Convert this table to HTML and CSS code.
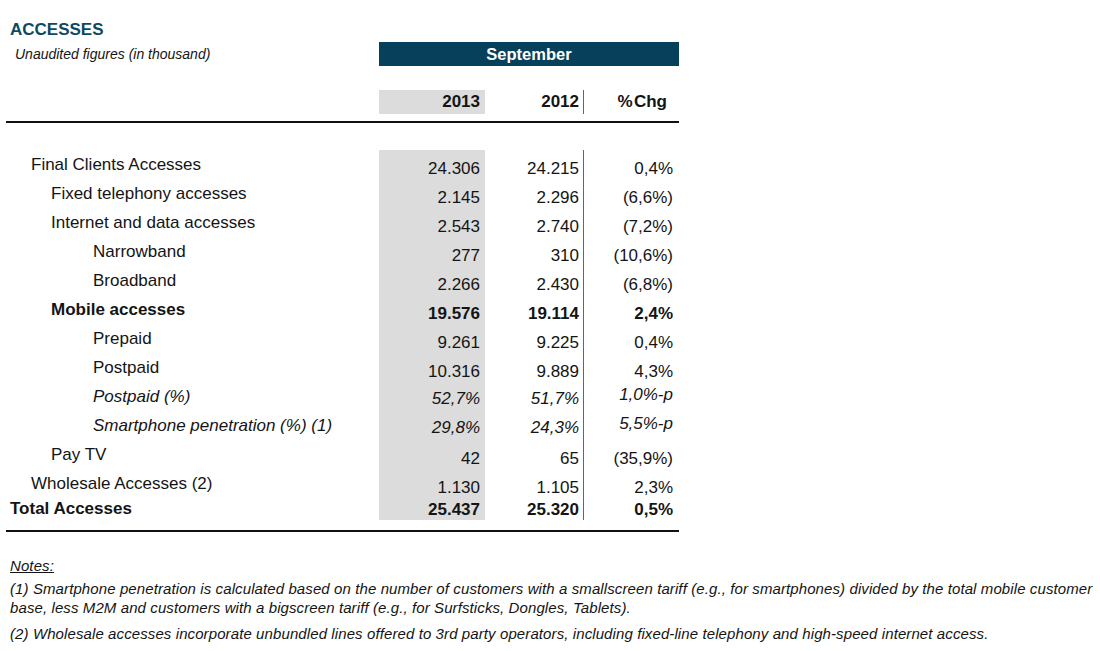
FILE: index.html
```html
<!DOCTYPE html>
<html lang="en">
<head>
<meta charset="utf-8">
<title>Accesses</title>
<link rel="stylesheet" href="styles.css">
</head>
<body>
<div class="report">
  <h1 class="title">ACCESSES</h1>
  <div class="band">
    <p class="sub">Unaudited figures (in thousand)</p>
    <div class="period">September</div>
  </div>
  <div class="head grid">
    <div></div>
    <div class="num shade hy1">2013</div>
    <div class="num sep hy2">2012</div>
    <div class="num hchg">%&#8202;Chg</div>
  </div>
  <div class="rule"></div>
  <div class="body grid">
    <div class="lab l1">Final Clients Accesses</div><div class="num shade">24.306</div><div class="num sep">24.215</div><div class="num chg">0,4%</div>
    <div class="lab l2">Fixed telephony accesses</div><div class="num shade">2.145</div><div class="num sep">2.296</div><div class="num chg">(6,6%)</div>
    <div class="lab l2">Internet and data accesses</div><div class="num shade">2.543</div><div class="num sep">2.740</div><div class="num chg">(7,2%)</div>
    <div class="lab l3">Narrowband</div><div class="num shade">277</div><div class="num sep">310</div><div class="num chg">(10,6%)</div>
    <div class="lab l3">Broadband</div><div class="num shade">2.266</div><div class="num sep">2.430</div><div class="num chg">(6,8%)</div>
    <div class="lab l2 b">Mobile accesses</div><div class="num shade b">19.576</div><div class="num sep b">19.114</div><div class="num chg b">2,4%</div>
    <div class="lab l3">Prepaid</div><div class="num shade">9.261</div><div class="num sep">9.225</div><div class="num chg">0,4%</div>
    <div class="lab l3">Postpaid</div><div class="num shade">10.316</div><div class="num sep">9.889</div><div class="num chg">4,3%</div>
    <div class="lab l3 it">Postpaid (%)</div><div class="num shade it">52,7%</div><div class="num sep it">51,7%</div><div class="num chg it up">1,0%-p</div>
    <div class="lab l3 it">Smartphone penetration (%) (1)</div><div class="num shade it">29,8%</div><div class="num sep it">24,3%</div><div class="num chg it up">5,5%-p</div>
    <div class="lab l2">Pay TV</div><div class="num shade">42</div><div class="num sep">65</div><div class="num chg">(35,9%)</div>
    <div class="lab l1">Wholesale Accesses (2)</div><div class="num shade">1.130</div><div class="num sep">1.105</div><div class="num chg">2,3%</div>
    <div class="lab l0 b tot">Total Accesses</div><div class="num shade b tot">25.437</div><div class="num sep b tot">25.320</div><div class="num chg b tot">0,5%</div>
  </div>
  <div class="rule bottom"></div>
</div>
<div class="notes">
  <p class="notes-title">Notes:</p>
  <p>(1) Smartphone penetration is calculated based on the number of customers with a smallscreen tariff (e.g., for smartphones) divided by the total mobile customer<br>base, less M2M and customers with a bigscreen tariff (e.g., for Surfsticks, Dongles, Tablets).</p>
  <p>(2) Wholesale accesses incorporate unbundled lines offered to 3rd party operators, including fixed-line telephony and high-speed internet access.</p>
</div>
</body>
</html>
```
FILE: styles.css
```css
html, body {
  margin: 0;
  padding: 0;
  background: #ffffff;
}
body {
  font-family: "Liberation Sans", Arial, sans-serif;
  color: #141414;
}
.report {
  width: 673px;
  padding: 20px 0 0 6px;
}
.title {
  margin: 0;
  padding-left: 4px;
  font-size: 17px;
  line-height: 20px;
  font-weight: bold;
  color: #0c4a60;
}
.band {
  display: grid;
  grid-template-columns: 373px 300px;
  margin-top: 2px;
  height: 24px;
}
.sub {
  margin: 0;
  padding-left: 9px;
  font-style: italic;
  font-size: 14px;
  line-height: 24px;
}
.period {
  background: #07405a;
  color: #fff;
  font-weight: bold;
  font-size: 16.5px;
  line-height: 24px;
  text-align: center;
}
.grid {
  display: grid;
  grid-template-columns: 373px 106px 99px 95px;
}
.head {
  margin-top: 24px;
  font-weight: bold;
  font-size: 17px;
  line-height: 24px;
}
.head .hy1 { padding-right: 5px; }
.head .hy2 { padding-right: 4px; }
.head .hchg { padding-right: 12px; }
.rule {
  margin-top: 7px;
  height: 2px;
  background: #111;
}
.rule.bottom {
  margin-top: 10px;
}
.body {
  margin-top: 27px;
  font-size: 17px;
}
.num {
  text-align: right;
}
.shade {
  background: #dcdcdc;
}
.sep {
  border-right: 1px solid #666;
}
.lab {
  line-height: 21px;
  padding-top: 4px;
  padding-bottom: 4px;
}
.body .num {
  line-height: 21px;
  padding: 8px 0 0 0;
  height: 29px;
  box-sizing: border-box;
}
.body .shade { padding-right: 5px; }
.body .sep { padding-right: 4px; }
.body .chg { padding-right: 6px; }
.body .num.it { padding-top: 6px; }
.body .num.it.up { padding-top: 2px; }
.l0 { padding-left: 4px; }
.l1 { padding-left: 25px; }
.l2 { padding-left: 45px; }
.l3 { padding-left: 87px; }
.b { font-weight: bold; }
.it { font-style: italic; }
.lab.tot {
  padding-top: 0;
  padding-bottom: 0;
  line-height: 22px;
}
.body .num.tot {
  height: 22px;
  padding-top: 1px;
  line-height: 22px;
}
.notes {
  padding: 0 0 0 10px;
  margin-top: 24px;
  font-style: italic;
  font-size: 15px;
  letter-spacing: 0.1px;
  line-height: 19px;
}
.notes p {
  margin: 0 0 7px 0;
  white-space: nowrap;
}
.notes .notes-title {
  text-decoration: underline;
  margin-bottom: 4px;
}
```
